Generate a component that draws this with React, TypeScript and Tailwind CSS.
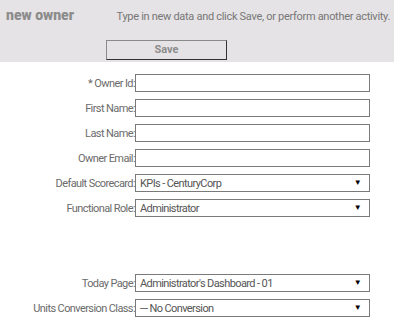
const font = { fontFamily: 'Roboto, "Liberation Sans", sans-serif' }

type Row = { label: string; kind: 'text' | 'select'; value?: string }

const topRows: Row[] = [
  { label: '* Owner Id:', kind: 'text' },
  { label: 'First Name:', kind: 'text' },
  { label: 'Last Name:', kind: 'text' },
  { label: 'Owner Email:', kind: 'text' },
  { label: 'Default Scorecard:', kind: 'select', value: 'KPIs - CenturyCorp' },
  { label: 'Functional Role:', kind: 'select', value: 'Administrator' },
]

const bottomRows: Row[] = [
  { label: 'Today Page:', kind: 'select', value: "Administrator's Dashboard - 01" },
  { label: 'Units Conversion Class:', kind: 'select', value: '--- No Conversion' },
]

const Field = ({ row }: { row: Row }) => (
  <>
    <div className="flex h-[18px] items-center justify-end text-[11px] leading-none tracking-[-0.6px] text-[#6b6b6b]">
      {row.label}
    </div>
    {row.kind === 'text' ? (
      <div className="h-[18px] border border-[#7a7a7a] bg-white" />
    ) : (
      <div className="flex h-[18px] items-center justify-between border border-[#7a7a7a] bg-white pl-[4px] pr-[8px] text-[11px] leading-none tracking-[-0.6px] text-[#555]">
        <span>{row.value}</span>
        <span className="text-[8px] text-black">▼</span>
      </div>
    )}
  </>
)

export default function App() {
  return (
    <div className="h-[326px] w-[394px] bg-white" style={font}>
      <div className="h-[62px] bg-[#e5e3e5]">
        <div className="flex items-start justify-between pl-[6px] pr-[4px] pt-[7px]">
          <span className="text-[14px] font-black leading-[16px] text-[#8c8c8c]">new owner</span>
          <span className="pt-[3px] text-[11px] leading-[14px] tracking-[-0.3px] text-[#777]">
            Type in new data and click Save, or perform another activity.
          </span>
        </div>
        <div className="pl-[106px] pt-[16px]">
          <button className="flex h-[20px] w-[121px] items-center justify-center border border-t-[#8a8a8a] border-l-[#8a8a8a] border-b-[#333] border-r-[#333] text-[11px] font-bold text-[#8c8c8c]">
            Save
          </button>
        </div>
      </div>
      <div className="grid grid-cols-[135px_235px] gap-y-[7px] pt-[12px]">
        {topRows.map((r) => (
          <Field key={r.label} row={r} />
        ))}
      </div>
      <div className="grid grid-cols-[135px_235px] gap-y-[7px] pt-[57px]">
        {bottomRows.map((r) => (
          <Field key={r.label} row={r} />
        ))}
      </div>
    </div>
  )
}
